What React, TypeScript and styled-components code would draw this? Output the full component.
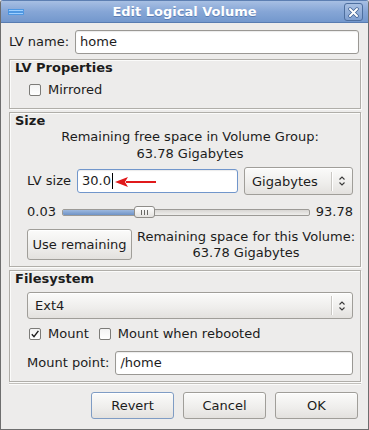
import React from "react";
import styled, { createGlobalStyle } from "styled-components";

const GlobalStyle = createGlobalStyle`
  html, body {
    margin: 0;
    padding: 0;
    background: #edeceb;
  }
  body {
    font-family: "DejaVu Sans", "Liberation Sans", sans-serif;
    font-size: 13px;
    color: #1c1c1c;
  }
`;

const Window = styled.div`
  box-sizing: border-box;
  width: 369px;
  height: 430px;
  border: 1px solid #6e6e6e;
  border-top-color: #5d7fb2;
  border-radius: 3px 3px 0 0;
  background: #edeceb;
  display: flex;
  flex-direction: column;
  overflow: hidden;
`;

const TitleBar = styled.div`
  position: relative;
  height: 21px;
  flex: none;
  display: flex;
  align-items: center;
  justify-content: center;
  background: linear-gradient(#a7bfe3, #86a6d6 50%, #7398cd);
  border-bottom: 1px solid #587cb1;
  color: #fff;
  font-weight: bold;
  font-size: 13px;
  text-shadow: 0 1px 0 #5a7db3;
`;

const WinIcon = styled.svg`
  position: absolute;
  left: 7px;
  top: 8px;
`;

const CloseBtn = styled.div`
  position: absolute;
  right: 5px;
  top: 2px;
  box-sizing: border-box;
  width: 19px;
  height: 18px;
  border: 1px solid #4e6f9f;
  border-radius: 3px;
  background: linear-gradient(#a9c0e2, #7f9fd0);
  display: flex;
  align-items: center;
  justify-content: center;
`;

const Body = styled.div`
  flex: 1;
  display: flex;
  flex-direction: column;
  padding: 7px 7px 0 8px;
`;

const Row = styled.div<{ $gap?: number; $top?: number }>`
  display: flex;
  align-items: center;
  gap: ${({ $gap }) => $gap ?? 6}px;
  margin-top: ${({ $top }) => $top ?? 0}px;
`;

const Label = styled.span`
  white-space: nowrap;
  line-height: 16px;
`;

const Entry = styled.div<{ $focus?: boolean; $w?: number }>`
  position: relative;
  box-sizing: border-box;
  height: 24px;
  flex: ${({ $w }) => ($w ? "none" : "1")};
  width: ${({ $w }) => ($w ? `${$w}px` : "auto")};
  background: #fff;
  border: 1px solid ${({ $focus }) => ($focus ? "#7196cb" : "#9a9894")};
  border-radius: 3px;
  box-shadow: inset 0 1px 1px rgba(0, 0, 0, 0.08);
  padding: 0 4px;
  display: flex;
  align-items: center;
  line-height: 16px;
`;

const Caret = styled.span`
  display: inline-block;
  width: 1px;
  height: 16px;
  background: #000;
  margin-left: 1px;
`;

const Arrow = styled.svg`
  position: absolute;
  left: 36px;
  top: 6px;
`;

const Frame = styled.div<{ $top: number; $bottom?: number }>`
  margin-top: ${({ $top }) => $top}px;
  border: 1px solid #b0aea9;
  box-shadow: inset 1px 1px 0 #fbfbfa, 1px 1px 0 #fbfbfa;
  padding: 0 7px ${({ $bottom }) => $bottom ?? 6}px 5px;
`;

const FrameTitle = styled.div`
  font-weight: bold;
  line-height: 15px;
`;

const FrameBody = styled.div`
  padding-left: 12px;
  display: flex;
  flex-direction: column;
`;

const CenterText = styled.div<{ $grow?: boolean; $lh?: number }>`
  text-align: center;
  line-height: ${({ $lh }) => $lh ?? 17}px;
  white-space: nowrap;
  flex: ${({ $grow }) => ($grow ? "1" : "none")};
`;

const Check = styled.span`
  box-sizing: border-box;
  width: 12px;
  height: 12px;
  margin-left: 2px;
  flex: none;
  border: 1px solid #7c7b78;
  border-radius: 2px;
  background: linear-gradient(#f3f3f3, #fff);
  display: flex;
  align-items: center;
  justify-content: center;
`;

const CheckLabel = styled(Label)`
  margin-left: 7px;
  margin-right: 8px;
`;

const Button = styled.div<{ $w?: number; $h?: number; $default?: boolean }>`
  box-sizing: border-box;
  width: ${({ $w }) => ($w ? `${$w}px` : "auto")};
  height: ${({ $h }) => $h ?? 27}px;
  flex: none;
  border: 1px solid ${({ $default }) => ($default ? "#7f9cc4" : "#a09e99")};
  border-radius: 3px;
  background: linear-gradient(#fbfbfa, #eeedeb 60%, #e3e1de);
  box-shadow: inset 0 1px 0 #fff;
  display: flex;
  align-items: center;
  justify-content: center;
  padding: 0 5px;
  white-space: nowrap;
`;

const Combo = styled(Button)`
  justify-content: space-between;
  padding: 0 6px 0 7px;
  flex: ${({ $w }) => ($w ? "none" : "1")};
`;

const ComboSide = styled.span`
  display: flex;
  align-items: center;
  height: 100%;
  gap: 6px;
`;

const ComboSep = styled.span`
  width: 1px;
  height: 19px;
  background: #c9c7c3;
  box-shadow: 1px 0 0 #fff;
`;

const Slider = styled.div`
  position: relative;
  flex: 1;
  height: 16px;
  display: flex;
  align-items: center;
`;

const Track = styled.div`
  box-sizing: border-box;
  width: 100%;
  height: 7px;
  border: 1px solid #9c9a96;
  border-radius: 2px;
  background: linear-gradient(#d8d6d3, #efeeec);
  overflow: hidden;
`;

const Fill = styled.div`
  height: 100%;
  background: linear-gradient(#9db8df, #6f93c6);
`;

const Handle = styled.div`
  position: absolute;
  top: 2px;
  box-sizing: border-box;
  width: 21px;
  height: 12px;
  border: 1px solid #8f8d89;
  border-radius: 3px;
  background: linear-gradient(#ffffff, #e4e2df);
  display: flex;
  align-items: center;
  justify-content: center;
  gap: 2px;
`;

const Grip = styled.span`
  width: 1px;
  height: 5px;
  background: #6a6966;
`;

const Separator = styled.div`
  margin-top: 1px;
  height: 1px;
  background: #c2c0bc;
  box-shadow: 0 1px 0 #fbfbfa;
`;

const Buttons = styled.div`
  display: flex;
  justify-content: flex-end;
  gap: 9px;
  margin-top: 8px;
  padding-right: 3px;
`;

const Spinner = () => (
  <svg width="8" height="12" viewBox="0 0 8 12">
    <path d="M1.5 4.5 L4 2 L6.5 4.5 M1.5 7.5 L4 10 L6.5 7.5" fill="none" stroke="#3a3a3a" strokeWidth="1.1" />
  </svg>
);

const CheckMark = () => (
  <svg width="10" height="10" viewBox="0 0 10 10">
    <path d="M1.8 5.2 L4 7.6 L8.4 1.8" fill="none" stroke="#1e1e1e" strokeWidth="1.4" />
  </svg>
);

const SLIDER_POS = (30.0 - 0.03) / (93.78 - 0.03);

const App = () => (
  <>
    <GlobalStyle />
    <Window>
      <TitleBar>
        <WinIcon width="16" height="6" viewBox="0 0 16 6">
          <rect x="0.5" y="0.5" width="15" height="2" fill="#9fd0ff" stroke="#3f8fe0" strokeWidth="0.8" />
          <rect x="0.5" y="3.5" width="15" height="2" fill="#9fd0ff" stroke="#3f8fe0" strokeWidth="0.8" />
        </WinIcon>
        Edit Logical Volume
        <CloseBtn>
          <svg width="11" height="11" viewBox="0 0 11 11">
            <path d="M2 2 L9 9 M9 2 L2 9" stroke="#3f5f8f" strokeWidth="3.4" strokeLinecap="round" />
            <path d="M2 2 L9 9 M9 2 L2 9" stroke="#fff" strokeWidth="2" strokeLinecap="round" />
          </svg>
        </CloseBtn>
      </TitleBar>
      <Body>
        <Row $gap={6} style={{ marginRight: 2 }}>
          <Label>LV name:</Label>
          <Entry>home</Entry>
        </Row>

        <Frame $top={5}>
          <FrameTitle>LV Properties</FrameTitle>
          <FrameBody>
            <Row $top={7} $gap={0}>
              <Check />
              <CheckLabel>Mirrored</CheckLabel>
            </Row>
            <div style={{ height: 4 }} />
          </FrameBody>
        </Frame>

        <Frame $top={3} $bottom={5}>
          <FrameTitle>Size</FrameTitle>
          <FrameBody>
            <CenterText>
              Remaining free space in Volume Group:
              <br />
              63.78 Gigabytes
            </CenterText>
            <Row $top={5} $gap={6}>
              <Label>LV size</Label>
              <Entry $focus $w={161}>
                30.0
                <Caret />
                <Arrow width="43" height="12" viewBox="0 0 43 12">
                  <path d="M12 6 H42" stroke="#e0191b" strokeWidth="2.2" />
                  <path d="M1 6 L14 1 L11 6 L14 11 Z" fill="#e0191b" />
                </Arrow>
              </Entry>
              <Combo $h={28}>
                Gigabytes
                <ComboSide>
                  <ComboSep />
                  <Spinner />
                </ComboSide>
              </Combo>
            </Row>
            <Row $top={9} $gap={6}>
              <Label>0.03</Label>
              <Slider>
                <Track>
                  <Fill style={{ width: `calc(${SLIDER_POS} * (100% - 21px) + 10px)` }} />
                </Track>
                <Handle style={{ left: `calc(${SLIDER_POS} * (100% - 21px))` }}>
                  <Grip />
                  <Grip />
                  <Grip />
                </Handle>
              </Slider>
              <Label>93.78</Label>
            </Row>
            <Row $top={9} $gap={5} style={{ alignItems: "flex-start" }}>
              <Button $w={105} $h={31}>Use remaining</Button>
              <CenterText $grow $lh={16}>
                Remaining space for this Volume:
                <br />
                63.78 Gigabytes
              </CenterText>
            </Row>
          </FrameBody>
        </Frame>

        <Frame $top={3}>
          <FrameTitle>Filesystem</FrameTitle>
          <FrameBody>
            <Row $top={6}>
              <Combo $h={27}>
                Ext4
                <ComboSide>
                  <ComboSep />
                  <Spinner />
                </ComboSide>
              </Combo>
            </Row>
            <Row $top={7} $gap={0}>
              <Check>
                <CheckMark />
              </Check>
              <CheckLabel>Mount</CheckLabel>
              <Check />
              <CheckLabel>Mount when rebooted</CheckLabel>
            </Row>
            <Row $top={9} $gap={6}>
              <Label>Mount point:</Label>
              <Entry>/home</Entry>
            </Row>
          </FrameBody>
        </Frame>

        <Separator />

        <Buttons>
          <Button $w={83} $default>Revert</Button>
          <Button $w={83}>Cancel</Button>
          <Button $w={83}>OK</Button>
        </Buttons>
      </Body>
    </Window>
  </>
);

export default App;
